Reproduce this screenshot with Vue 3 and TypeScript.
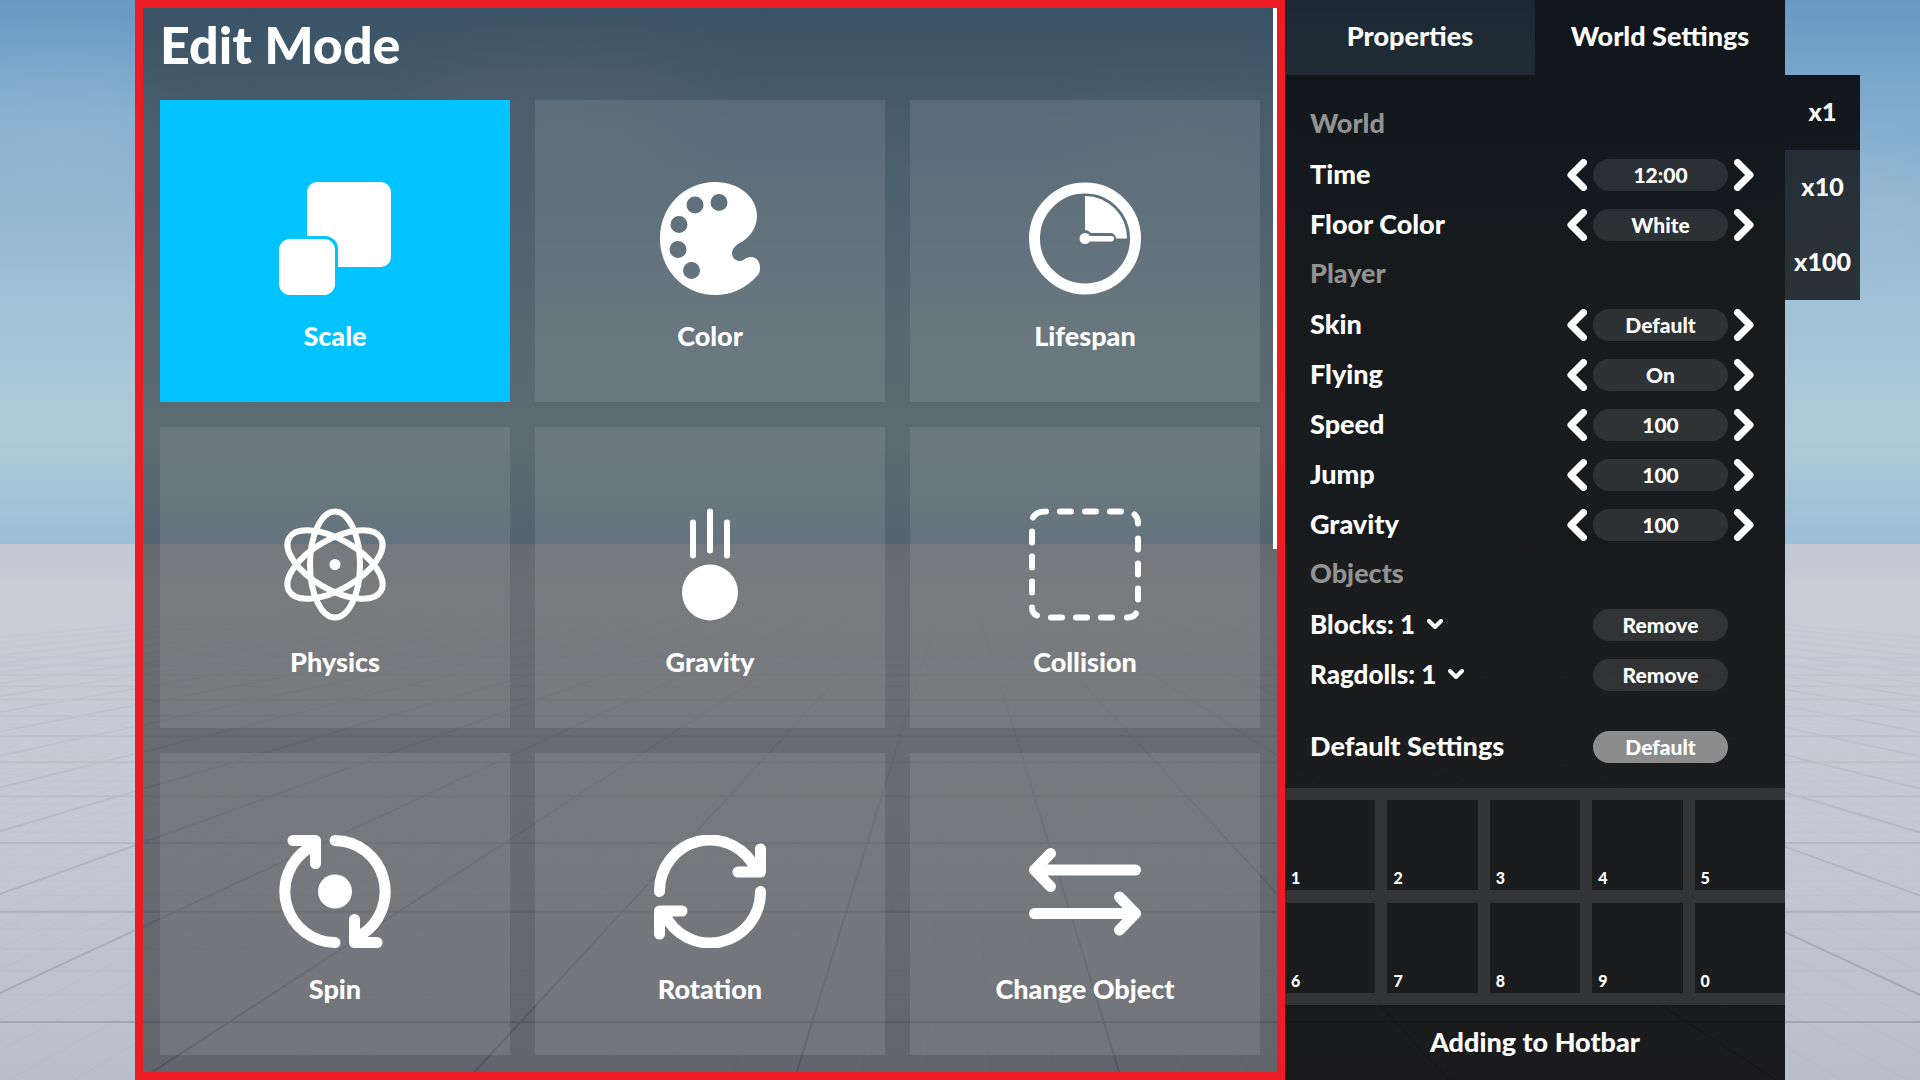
<script setup lang="ts">
import { ref } from 'vue'

interface Mode {
  id: string
  label: string
}

interface Setting {
  label: string
  value: string
}

interface FloorLine {
  x1: number
  y1: number
  x2: number
  y2: number
}

const modes: Mode[] = [
  { id: 'scale', label: 'Scale' },
  { id: 'color', label: 'Color' },
  { id: 'lifespan', label: 'Lifespan' },
  { id: 'physics', label: 'Physics' },
  { id: 'gravity', label: 'Gravity' },
  { id: 'collision', label: 'Collision' },
  { id: 'spin', label: 'Spin' },
  { id: 'rotation', label: 'Rotation' },
  { id: 'change', label: 'Change Object' },
]

const groups: { title: string; settings: Setting[] }[] = [
  {
    title: 'World',
    settings: [
      { label: 'Time', value: '12:00' },
      { label: 'Floor Color', value: 'White' },
    ],
  },
  {
    title: 'Player',
    settings: [
      { label: 'Skin', value: 'Default' },
      { label: 'Flying', value: 'On' },
      { label: 'Speed', value: '100' },
      { label: 'Jump', value: '100' },
      { label: 'Gravity', value: '100' },
    ],
  },
]

const objects = ['Blocks: 1', 'Ragdolls: 1']
const slots = ['1', '2', '3', '4', '5', '6', '7', '8', '9', '0']
const tabs = ['Properties', 'World Settings']
const multipliers = ['x1', 'x10', 'x100']

const activeMode = ref('scale')
const activeTab = ref('World Settings')
const activeMultiplier = ref('x1')

// Floor grid in one-point perspective: vanishing point and tile spacing.
const vanish = { x: 958, y: 548 }
const bottom = 1080

function raysOf(spacing: number, count: number): FloorLine[] {
  const lines: FloorLine[] = []
  for (let k = -count; k < count; k++) {
    const slope = ((k + 0.5) * spacing) / 252
    lines.push({
      x1: vanish.x + slope * 14,
      y1: vanish.y + 14,
      x2: vanish.x + slope * (bottom - vanish.y),
      y2: bottom,
    })
  }
  return lines
}

function rowsOf(step: number, count: number): FloorLine[] {
  const lines: FloorLine[] = []
  for (let k = 0; k < count; k++) {
    const y = vanish.y + 1 / (0.00211 + k * step)
    lines.push({ x1: 0, y1: y, x2: 1920, y2: y })
  }
  return lines
}

const mainLines = [...raysOf(155, 18), ...rowsOf(0.00064, 12)]
const fineLines = [...raysOf(31, 60), ...rowsOf(0.000128, 30)]
</script>

<template>
  <div class="stage">
    <svg class="scene" viewBox="0 0 1920 1080" preserveAspectRatio="none" aria-hidden="true">
      <defs>
        <linearGradient id="sky" x1="0" y1="0" x2="0" y2="1">
          <stop offset="0" stop-color="#6899c4" />
          <stop offset="0.22" stop-color="#82adcf" />
          <stop offset="0.55" stop-color="#a1c1d7" />
          <stop offset="0.8" stop-color="#aecbd9" />
          <stop offset="1" stop-color="#9bbdd6" />
        </linearGradient>
        <linearGradient id="floor" x1="0" y1="0" x2="0" y2="1">
          <stop offset="0" stop-color="#c1c7d3" />
          <stop offset="0.08" stop-color="#c8cdd8" />
          <stop offset="0.5" stop-color="#c4cad5" />
          <stop offset="1" stop-color="#b8bfcb" />
        </linearGradient>
        <linearGradient id="fade" gradientUnits="userSpaceOnUse" x1="0" y1="600" x2="0" y2="1080">
          <stop offset="0" stop-color="#fff" stop-opacity="0" />
          <stop offset="0.4" stop-color="#fff" stop-opacity="0.35" />
          <stop offset="1" stop-color="#fff" stop-opacity="1" />
        </linearGradient>
        <mask id="floorMask" maskUnits="userSpaceOnUse" x="0" y="540" width="1920" height="540">
          <rect x="0" y="540" width="1920" height="540" fill="url(#fade)" />
        </mask>
        <filter id="cloud" x="-50%" y="-50%" width="200%" height="200%">
          <feGaussianBlur stdDeviation="34" />
        </filter>
      </defs>
      <rect width="1920" height="546" fill="url(#sky)" />
      <g filter="url(#cloud)" fill="#b9c9d8" opacity="0.22">
        <ellipse cx="60" cy="120" rx="110" ry="50" />
        <ellipse cx="560" cy="110" rx="150" ry="60" />
        <ellipse cx="1180" cy="130" rx="120" ry="30" />
        <ellipse cx="1850" cy="210" rx="90" ry="40" />
      </g>
      <rect y="544" width="1920" height="536" fill="url(#floor)" />
      <g mask="url(#floorMask)" stroke="#50566e">
        <g stroke-width="1" opacity="0.04">
          <line v-for="(l, i) in fineLines" :key="i" :x1="l.x1" :y1="l.y1" :x2="l.x2" :y2="l.y2" />
        </g>
        <g stroke-width="2" opacity="0.28">
          <line v-for="(l, i) in mainLines" :key="i" :x1="l.x1" :y1="l.y1" :x2="l.x2" :y2="l.y2" />
        </g>
      </g>
    </svg>

    <main class="editor">
      <h1 class="title">Edit Mode</h1>
      <div class="modes">
        <button
          v-for="mode in modes"
          :key="mode.id"
          type="button"
          class="mode"
          :class="{ active: activeMode === mode.id }"
          @click="activeMode = mode.id"
        >
          <svg class="icon" viewBox="0 0 112 113" aria-hidden="true">
            <g v-if="mode.id === 'scale'" fill="#fff">
              <path d="M28 54V10A10 10 0 0 1 38 0H102A10 10 0 0 1 112 10V75A10 10 0 0 1 102 85H59V67A13 13 0 0 0 46 54Z" />
              <rect x="0" y="57" width="56" height="56" rx="11" />
            </g>
            <path
              v-else-if="mode.id === 'color'"
              fill="#fff"
              fill-rule="evenodd"
              d="M61 0C85 0 103 15 103 34C103 46 95 57 84 62C80 65 78 68 78 71C78 76 82 79 86 79C90 79 91 75 97 75C103 75 106 80 106 86C106 90 105 92 103 94C92 106 78 113 61 113C30 113 6 88 6 56.5C6 25 30 0 61 0ZM32.500 23a8.500 8.500 0 1 0 17 0a8.500 8.500 0 1 0 -17 0ZM56.500 20.500a8.500 8.500 0 1 0 17 0a8.500 8.500 0 1 0 -17 0ZM16.500 42.500a8.500 8.500 0 1 0 17 0a8.500 8.500 0 1 0 -17 0ZM15.500 67.500a8.500 8.500 0 1 0 17 0a8.500 8.500 0 1 0 -17 0ZM29 88.500a8.500 8.500 0 1 0 17 0a8.500 8.500 0 1 0 -17 0Z"
            />
            <g v-else-if="mode.id === 'lifespan'" fill="#fff">
              <circle cx="56" cy="56.500" r="50.500" fill="none" stroke="#fff" stroke-width="11" />
              <path d="M56 14A42 42 0 0 1 98 56.500H87C87 53 84 51 81 51H62C60 49 58 48 56 48Z" />
              <circle cx="56" cy="56.500" r="5.500" />
              <rect x="56" y="54" width="29" height="5.500" rx="2.700" />
            </g>
            <g v-else-if="mode.id === 'physics'" fill="none" stroke="#fff" stroke-width="6">
              <ellipse cx="56" cy="56.500" rx="25" ry="53" />
              <ellipse cx="56" cy="56.500" rx="25" ry="53" transform="rotate(60 56 56.5)" />
              <ellipse cx="56" cy="56.500" rx="25" ry="53" transform="rotate(-60 56 56.5)" />
              <circle cx="56" cy="56.500" r="5.500" fill="#fff" stroke="none" />
            </g>
            <g v-else-if="mode.id === 'gravity'" fill="none" stroke="#fff" stroke-width="6" stroke-linecap="round">
              <path d="M56 3.500V42.500M39 14.500V47.500M73 14.500V47.500" />
              <circle cx="56" cy="84.500" r="28" fill="#fff" stroke="none" />
            </g>
            <path
              v-else-if="mode.id === 'collision'"
              fill="none"
              stroke="#fff"
              stroke-width="6"
              stroke-linecap="round"
              d="M4 9.500C6 5.500 10 3.500 17 3.500M31 3.500H42M56 3.500H67M81 3.500H92M105.500 6.500C108 8.500 109 11.500 109 15.500M109 30.500V41.500M109 55.500V66.500M109 80.500V91.500M107 105.500C105 108.500 101 109.500 98 109.500M83 109.500H72M58 109.500H47M33 109.500H22M8 107.500C5 106.500 3 103.500 3 99.500M3 84.500V73.500M3 59.500V48.500M3 34.500V23.500"
            />
            <g v-else-if="mode.id === 'spin'" fill="none" stroke="#fff" stroke-width="11" stroke-linecap="round" stroke-linejoin="round">
              <path d="M56 5.500A50.500 51 0 0 1 82 100M75.500 84.500V107.500H98M56 107.500A50.500 51 0 0 1 30 13M36.500 28.500V5.500H14" />
              <circle cx="56" cy="56.500" r="17" fill="#fff" stroke="none" />
            </g>
            <path
              v-else-if="mode.id === 'rotation'"
              fill="none"
              stroke="#fff"
              stroke-width="11"
              stroke-linecap="round"
              stroke-linejoin="round"
              d="M5.500 56.500A50.500 51 0 0 1 102 35M106.500 14V37H84M106.500 56.500A50.500 51 0 0 1 10 78M5.500 99V76H28"
            />
            <path
              v-else
              fill="none"
              stroke="#fff"
              stroke-width="11"
              stroke-linecap="round"
              stroke-linejoin="round"
              d="M106.500 35H5.500M21.500 18.500L5.500 35L21.500 51.500M5.500 78.500H106.500M90.500 62L106.500 78.500L90.500 95"
            />
          </svg>
          <span>{{ mode.label }}</span>
        </button>
      </div>
      <div class="scrollbar"></div>
    </main>

    <aside class="side">
      <nav class="tabs">
        <button
          v-for="tab in tabs"
          :key="tab"
          type="button"
          class="tab"
          :class="{ active: activeTab === tab }"
          @click="activeTab = tab"
        >
          {{ tab }}
        </button>
      </nav>

      <section class="settings">
        <template v-for="group in groups" :key="group.title">
          <h2 class="heading">{{ group.title }}</h2>
          <div v-for="setting in group.settings" :key="setting.label" class="row">
            <span class="name">{{ setting.label }}</span>
            <button type="button" class="arrow" :aria-label="'Previous ' + setting.label">
              <svg viewBox="0 0 20 32"><path d="M16.500 3.500L4 16L16.500 28.500" /></svg>
            </button>
            <output class="pill">{{ setting.value }}</output>
            <button type="button" class="arrow" :aria-label="'Next ' + setting.label">
              <svg viewBox="0 0 20 32"><path d="M3.500 3.500L16 16L3.500 28.500" /></svg>
            </button>
          </div>
        </template>

        <h2 class="heading">Objects</h2>
        <div v-for="item in objects" :key="item" class="row wide">
          <button type="button" class="name expand">
            {{ item }}
            <svg viewBox="0 0 16 10"><path d="M2 2L8 8L14 2" /></svg>
          </button>
          <button type="button" class="pill">Remove</button>
        </div>
        <div class="row wide reset">
          <span class="name">Default Settings</span>
          <button type="button" class="pill light">Default</button>
        </div>
      </section>

      <section class="hotbar">
        <button v-for="slot in slots" :key="slot" type="button" class="slot">{{ slot }}</button>
      </section>
      <footer class="status">Adding to Hotbar</footer>
    </aside>

    <nav class="multipliers">
      <button
        v-for="m in multipliers"
        :key="m"
        type="button"
        class="multiplier"
        :class="{ active: activeMultiplier === m }"
        @click="activeMultiplier = m"
      >
        {{ m }}
      </button>
    </nav>
  </div>
</template>

<style>
body {
  margin: 0;
}
</style>

<style scoped>
.stage {
  position: relative;
  display: grid;
  grid-template-columns: 135fr 1150fr 500fr 75fr 60fr;
  min-height: 100vh;
  color: #fff;
  font-family: Lato, 'Open Sans', sans-serif;
  font-size: 27px;
  font-weight: 900;
  line-height: 32px;
}

.stage * {
  box-sizing: border-box;
}

button {
  margin: 0;
  padding: 0;
  border: 0;
  background: none;
  color: inherit;
  font: inherit;
  cursor: pointer;
}

.scene {
  position: absolute;
  inset: 0;
  width: 100%;
  height: 100%;
}

.editor {
  position: relative;
  grid-column: 2;
  display: flex;
  flex-direction: column;
  padding: 0 17px 17px;
  border: 8px solid #ed1c24;
  background: rgba(12, 12, 10, 0.5);
}

.title {
  margin: 0;
  padding: 4px 0 24px;
  font-size: 52px;
  font-weight: 900;
  line-height: 64px;
}

.modes {
  flex: 1;
  display: grid;
  grid-template-columns: repeat(3, 1fr);
  grid-auto-rows: 1fr;
  gap: 25px;
}

.mode {
  display: flex;
  flex-direction: column;
  align-items: center;
  justify-content: center;
  gap: 25px;
  padding-top: 32px;
  background: rgba(255, 255, 255, 0.1);
}

.mode.active {
  background: #00c3ff;
}

.icon {
  width: 112px;
  height: 113px;
}

.scrollbar {
  position: absolute;
  top: 0;
  right: 0;
  width: 4px;
  height: 50.8%;
  background: #fff;
}

.side {
  position: relative;
  grid-column: 3;
  display: flex;
  flex-direction: column;
}

.tabs {
  display: grid;
  grid-template-columns: 1fr 1fr;
  height: 75px;
}

.tab,
.multiplier {
  padding-bottom: 3px;
  background: rgba(3, 3, 3, 0.75);
}

.tab.active,
.multiplier.active,
.settings,
.status {
  background: rgba(3, 3, 3, 0.88);
}

.settings {
  flex: 1;
  padding: 25px 31px 16px 25px;
}

.heading {
  margin: 0;
  padding-bottom: 4px;
  color: #929292;
  font-size: 27px;
  font-weight: 900;
  line-height: 46px;
}

.row {
  display: flex;
  align-items: center;
  gap: 6px;
  height: 50px;
}

.wide {
  padding-right: 26px;
}

.reset {
  margin-top: 22px;
}

.name {
  margin-right: auto;
  padding-bottom: 3px;
}

.expand {
  display: flex;
  align-items: center;
  gap: 12px;
  font-size: 26px;
}

.expand svg {
  width: 16px;
  height: 10px;
}

.arrow {
  width: 20px;
  height: 32px;
}

.arrow svg {
  display: block;
}

.arrow path,
.expand path {
  fill: none;
  stroke: #fff;
  stroke-linecap: round;
  stroke-linejoin: round;
}

.arrow path {
  stroke-width: 7;
}

.expand path {
  stroke-width: 4;
}

.pill {
  width: 135px;
  height: 32px;
  padding-bottom: 1px;
  border-radius: 16px;
  background: rgba(255, 255, 255, 0.1);
  font-size: 21px;
  line-height: 31px;
  text-align: center;
}

.pill.light {
  background: #8c8c8c;
}

.hotbar {
  display: grid;
  grid-template-columns: repeat(5, 1fr);
  grid-auto-rows: 90px;
  gap: 13px 12px;
  padding: 12px 0;
  background: #333436;
}

.slot {
  display: flex;
  align-items: flex-end;
  padding: 0 6px 3px;
  background: #1b1c1d;
  font-size: 16px;
  line-height: 18px;
}

.status {
  height: 75px;
  line-height: 73px;
  text-align: center;
}

.multipliers {
  position: relative;
  grid-column: 4;
  display: flex;
  flex-direction: column;
  padding-top: 75px;
}

.multiplier {
  height: 75px;
  font-size: 25px;
}
</style>
